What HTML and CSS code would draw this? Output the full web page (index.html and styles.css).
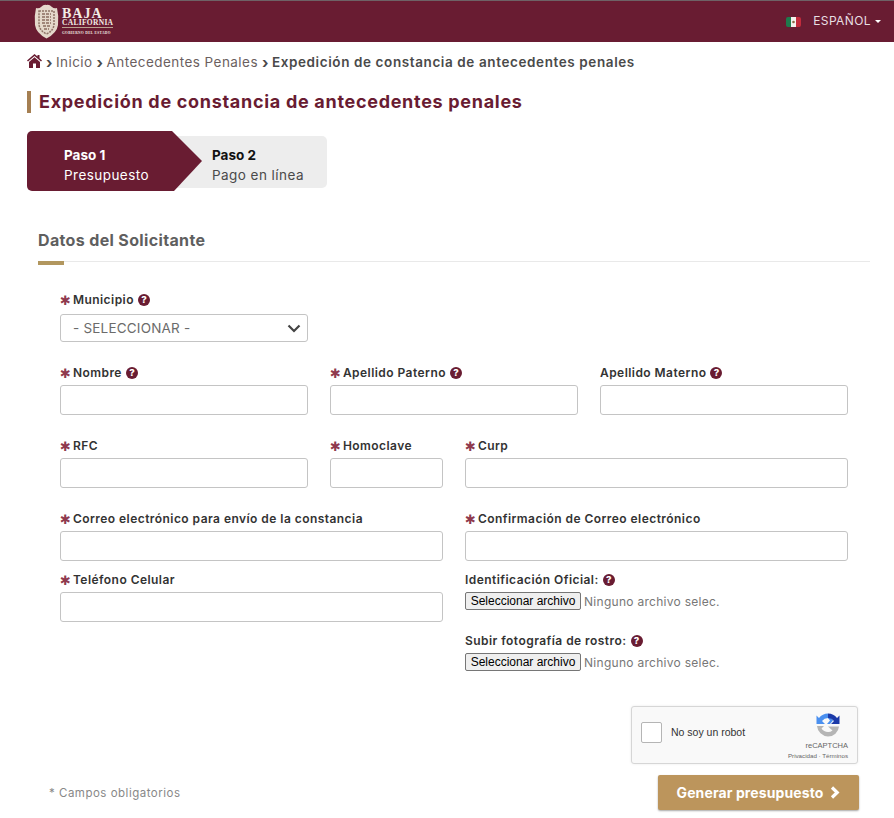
FILE: index.html
```html
<!DOCTYPE html>
<html lang="es">
<head>
  <meta charset="UTF-8" />
  <meta name="viewport" content="width=device-width, initial-scale=1.0"/>
  <title>Expedición de constancia de antecedentes penales</title>
  <link rel="stylesheet" href="styles.css">
</head>
<body>
  <header class="topbar">
    <div class="brand">
      <svg class="crest" width="25" height="35" viewBox="0 0 25 35">
        <path d="M2 4 Q5 5 7 3 Q10 0 12.500 1 Q15 0 18 3 Q20 5 23 4 Q25 12 24 21 Q23 29 12.500 34.500 Q2 29 1 21 Q0 12 2 4 Z" fill="#e4d8cb"/>
        <path d="M5 7 H20 V21 Q19 27 12.500 30 Q6 27 5 21 Z" fill="none" stroke="#8f7468" stroke-width="1.500" stroke-dasharray="2 1"/>
        <path d="M8 10 H17 M8 13 H17 M8 16 H17 M8 19 H17 M9 22 H16 M10 25 H15" stroke="#8a6c62" stroke-width="1.500" stroke-dasharray="3 1"/>
      </svg>
      <div class="brand-text">
        <div class="brand-baja">BAJA</div>
        <div class="brand-california">CALIFORNIA</div>
        <div class="brand-gob">GOBIERNO DEL ESTADO</div>
      </div>
    </div>
    <div class="lang">
      <svg class="flag" width="15" height="10" viewBox="0 0 15 10">
        <rect width="5" height="10" fill="#1f7a4d"/>
        <rect x="5" width="5" height="10" fill="#f4f1ee"/>
        <rect x="10" width="5" height="10" fill="#c22b3c"/>
        <circle cx="7.500" cy="5" r="1.300" fill="#8a6a45"/>
      </svg>
      <span>ESPAÑOL</span>
      <span class="caret"></span>
    </div>
  </header>

  <div class="page">
    <nav class="crumbs">
      <svg class="home" width="15" height="14" viewBox="0 0 15 14">
        <path d="M7.500 0 L10.500 2.600 L10.500 1 L12.500 1 L12.500 4.300 L15 6.500 L14 7.600 L7.500 2 L1 7.600 L0 6.500 Z M7.500 3.300 L13 8 L13 14 L9 14 L9 9.500 L6 9.500 L6 14 L2 14 L2 8 Z" fill="#691c32"/>
      </svg>
      <span class="sep">›</span><a>Inicio</a>
      <span class="sep">›</span><a>Antecedentes Penales</a>
      <span class="sep">›</span><strong>Expedición de constancia de antecedentes penales</strong>
    </nav>

    <h1 class="title">Expedición de constancia de antecedentes penales</h1>

    <div class="steps">
      <div class="step step-on">
        <b>Paso 1</b>
        <span>Presupuesto</span>
      </div>
      <div class="step step-off">
        <b>Paso 2</b>
        <span>Pago en línea</span>
      </div>
    </div>

    <h2 class="section">Datos del Solicitante</h2>

    <form class="form">
      <div class="form-row">
        <div class="field col-4">
          <label class="req">Municipio <i class="help">?</i></label>
          <div class="select-wrap">
            <select>
              <option>- SELECCIONAR -</option>
            </select>
            <svg class="chevron" width="14" height="9" viewBox="0 0 14 9">
              <path d="M1.500 1.500 L7 7 L12.500 1.500" fill="none" stroke="#444" stroke-width="2.200"/>
            </svg>
          </div>
        </div>
      </div>

      <div class="form-row">
        <div class="field col-4">
          <label class="req">Nombre <i class="help">?</i></label>
          <input type="text" />
        </div>
        <div class="field col-4">
          <label class="req">Apellido Paterno <i class="help">?</i></label>
          <input type="text" />
        </div>
        <div class="field col-4">
          <label>Apellido Materno <i class="help">?</i></label>
          <input type="text" />
        </div>
      </div>

      <div class="form-row">
        <div class="field col-4">
          <label class="req">RFC</label>
          <input type="text" />
        </div>
        <div class="field col-2">
          <label class="req">Homoclave</label>
          <input type="text" />
        </div>
        <div class="field col-6">
          <label class="req">Curp</label>
          <input type="text" />
        </div>
      </div>

      <div class="form-row tight">
        <div class="field col-6">
          <label class="req">Correo electrónico para envío de la constancia</label>
          <input type="text" />
        </div>
        <div class="field col-6">
          <label class="req">Confirmación de Correo electrónico</label>
          <input type="text" />
        </div>
      </div>

      <div class="form-row">
        <div class="field col-6">
          <label class="req">Teléfono Celular</label>
          <input type="text" />
        </div>
        <div class="col-6">
          <div class="field file-field">
            <label>Identificación Oficial: <i class="help">?</i></label>
            <div class="file"><button type="button">Seleccionar archivo</button><span>Ninguno archivo selec.</span></div>
          </div>
          <div class="field file-field">
            <label>Subir fotografía de rostro: <i class="help">?</i></label>
            <div class="file"><button type="button">Seleccionar archivo</button><span>Ninguno archivo selec.</span></div>
          </div>
        </div>
      </div>
    </form>

    <div class="captcha-line">
      <div class="captcha">
        <span class="check"></span>
        <span class="robot">No soy un robot</span>
        <div class="rc">
          <svg class="rc-logo" width="24" height="24" viewBox="0 0 24 24">
            <path d="M1 13 H8 L5.500 15.500 A8 8 0 0 0 12 19 A7 7 0 0 0 16.500 17.500 L12 13.500 H23 A11 11 0 0 1 12 23.500 A11.500 11.500 0 0 1 1 13 Z" fill="#b5b5b5"/>
            <path d="M12 0.500 A11.500 11.500 0 0 0 3 5 L0.500 2.500 V11 H9 L6 8 A8 8 0 0 1 12 5 L14 7.500 L11 11 H14 L17 7.500 Z" fill="#4a90f0"/>
            <path d="M12 0.500 A11.500 11.500 0 0 1 21 5 L23.500 2.500 V11 H15 L18 8 A8 8 0 0 0 12 5 Z" fill="#1c3aa9"/>
          </svg>
          <span class="rc-name">reCAPTCHA</span>
          <span class="rc-links">Privacidad · Términos</span>
        </div>
      </div>
    </div>

    <div class="bottom">
      <span class="note">* Campos obligatorios</span>
      <button type="button" class="go">Generar presupuesto
        <svg width="10" height="13" viewBox="0 0 10 13"><path d="M2 1.500 L7.200 6.500 L2 11.500" fill="none" stroke="#fff" stroke-width="3.200"/></svg>
      </button>
    </div>
  </div>
</body>
</html>
```

FILE: styles.css
```css
* {
  box-sizing: border-box;
}
html, body {
  height: 818px;
  overflow: hidden;
}
body {
  font-family: Inter, "Open Sans", Arial, sans-serif;
  background: #fff;
  margin: 0;
  color: #4a4a4a;
}
.topbar {
  height: 42px;
  background: #691c32;
  border-top: 1px solid #6e6266;
  display: flex;
  align-items: center;
  justify-content: space-between;
  padding: 0 13px 0 34px;
}
.brand {
  display: flex;
  align-items: center;
  gap: 3px;
}
.brand-text {
  color: #f2ebe4;
  font-family: "Liberation Serif", serif;
  font-weight: bold;
}
.brand-baja {
  font-size: 14px;
  line-height: 11px;
  letter-spacing: 1px;
}
.brand-california {
  font-size: 7.500px;
  line-height: 8px;
  letter-spacing: 0.300px;
  border-bottom: 1px solid #b9a28f;
}
.brand-gob {
  font-size: 3.500px;
  line-height: 5px;
  letter-spacing: 0.350px;
  margin-top: 3px;
}
.lang {
  display: flex;
  align-items: center;
  color: #e8dfe2;
  font-size: 12px;
  letter-spacing: 0.400px;
  margin-top: -2px;
}
.flag {
  margin-right: 12px;
  margin-top: 3px;
  border-radius: 2px;
}
.caret {
  width: 0;
  height: 0;
  margin-left: 4px;
  margin-top: 2px;
  border-left: 3px solid transparent;
  border-right: 3px solid transparent;
  border-top: 3px solid #fff;
}
.page {
  padding: 0 24px 0 27px;
}
.crumbs {
  display: flex;
  align-items: center;
  height: 20px;
  margin-top: 10px;
  font-size: 13.500px;
  letter-spacing: 0.450px;
  color: #6b5f5f;
}
.crumbs strong {
  color: #4a4a4a;
  font-weight: 600;
  letter-spacing: 0.600px;
}
.home {
  margin-top: -3px;
}
.sep {
  font-weight: bold;
  font-size: 15px;
  line-height: 1;
  margin: 0 3px 0 4px;
  color: #4a4a4a;
}
.title {
  margin: 19px 0 0 0;
  padding-left: 8px;
  height: 22px;
  line-height: 22px;
  font-size: 18px;
  letter-spacing: 0.700px;
  font-weight: 700;
  color: #691c32;
  border-left: 4px solid #a57f52;
}
.steps {
  display: flex;
  align-items: center;
  margin-top: 18px;
}
.step {
  display: flex;
  flex-direction: column;
  justify-content: center;
  font-size: 13.500px;
  letter-spacing: 0.450px;
  line-height: 20px;
}
.step b {
  font-weight: 700;
  letter-spacing: 0;
}
.step-on {
  position: relative;
  z-index: 1;
  width: 175px;
  height: 60px;
  padding: 8px 0 0 37px;
  color: #fff;
  background: #691c32;
  border-radius: 5px 0 0 5px;
  clip-path: polygon(0 0, 145px 0, 175px 50%, 147px 100%, 0 100%);
}
.step-off {
  width: 151px;
  height: 52px;
  margin: 2px 0 0 -26px;
  padding: 6px 0 0 36px;
  background: #ededed;
  border-radius: 0 5px 5px 0;
}
.step-off b {
  color: #111;
}
.section {
  position: relative;
  margin: 39px 0 0 11px;
  padding: 0 0 11px 0;
  font-size: 16px;
  letter-spacing: 0.350px;
  line-height: 20px;
  font-weight: 700;
  color: #5f5f5f;
  border-bottom: 1px solid #e9e9e9;
  width: 832px;
}
.section::after {
  content: "";
  position: absolute;
  left: 0;
  bottom: -4px;
  width: 26px;
  height: 4px;
  background: #b2975f;
}
.form {
  width: 788px;
  margin: 32px 0 0 33px;
}
.form-row {
  display: grid;
  grid-template-columns: repeat(12, 1fr);
  column-gap: 22px;
  margin-bottom: 25px;
}
.form-row.tight {
  margin-bottom: 13px;
}
.col-2 {
  grid-column: span 2;
}
.col-4 {
  grid-column: span 4;
}
.col-6 {
  grid-column: span 6;
}
label {
  display: flex;
  align-items: flex-start;
  gap: 4px;
  height: 18px;
  line-height: 12px;
  font-size: 12px;
  letter-spacing: 0.450px;
  font-weight: 600;
  color: #333;
  white-space: nowrap;
}
label.req::before {
  content: "✱";
  font-family: "DejaVu Sans", sans-serif;
  color: #8f3a4f;
  font-size: 13px;
  line-height: 13px;
  letter-spacing: 0;
  margin-right: -2px;
}
.help {
  display: block;
  width: 12px;
  height: 12px;
  line-height: 12px;
  border-radius: 50%;
  background: #691c32;
  color: #fff;
  font-size: 9.500px;
  letter-spacing: 0;
  font-style: normal;
  font-weight: 800;
  text-align: center;
}
input[type="text"] {
  display: block;
  width: 100%;
  height: 30px;
  background: #fff;
  border: 1px solid #c4c4c4;
  border-radius: 3px;
}
.select-wrap {
  position: relative;
  margin-top: 2px;
}
select {
  display: block;
  width: 100%;
  height: 28px;
  padding-left: 12px;
  appearance: none;
  background: #fff;
  border: 1px solid #c4c4c4;
  border-radius: 3px;
  font-family: inherit;
  font-size: 13.500px;
  letter-spacing: 0.200px;
  color: #6b6b6b;
}
.chevron {
  position: absolute;
  right: 7px;
  top: 10px;
}
.file-field + .file-field {
  margin-top: 25px;
}
.file {
  display: flex;
  align-items: center;
  gap: 3px;
  height: 18px;
}
.file button {
  height: 18px;
  width: 116px;
  padding: 0;
  background: #efefef;
  border: 1px solid #767676;
  border-radius: 2px;
  font-family: "Liberation Sans", Arial, sans-serif;
  font-size: 12px;
  color: #000;
}
.file span {
  font-size: 12px;
  letter-spacing: 0.280px;
  color: #777;
}
.captcha-line {
  display: flex;
  justify-content: flex-end;
  width: 831px;
  margin-top: 35px;
}
.captcha {
  display: flex;
  align-items: center;
  width: 227px;
  height: 58px;
  padding: 0 9px 6px 9px;
  background: #f9f9f9;
  border: 1px solid #d6d6d6;
  border-radius: 3px;
  box-shadow: 0 0 3px rgba(0,0,0,0.08);
  font-family: "Liberation Sans", Arial, sans-serif;
}
.check {
  width: 21px;
  height: 21px;
  background: #fff;
  border: 1px solid #b5b5b5;
  border-radius: 2px;
}
.robot {
  margin-left: 9px;
  font-size: 10.500px;
  color: #333;
}
.rc {
  display: flex;
  flex-direction: column;
  align-items: flex-end;
  align-self: flex-start;
  margin-left: auto;
  margin-top: 6px;
  color: #666;
}
.rc-logo {
  margin: 0 8px 3px 0;
}
.rc-name {
  font-size: 7.500px;
  line-height: 11px;
}
.rc-links {
  font-size: 6.200px;
  line-height: 9px;
}
.bottom {
  display: flex;
  align-items: center;
  justify-content: space-between;
  width: 832px;
  margin-top: 11px;
  padding-left: 22px;
}
.note {
  font-size: 11.500px;
  letter-spacing: 0.500px;
  color: #888;
}
.go {
  display: flex;
  align-items: center;
  justify-content: center;
  gap: 7px;
  width: 201px;
  height: 35px;
  background: #bc955c;
  border: none;
  border-radius: 2px;
  box-shadow: 0 1px 2px rgba(0,0,0,0.35);
  color: #fff;
  font-family: inherit;
  font-size: 14px;
  letter-spacing: 0.100px;
  font-weight: 700;
}
```
